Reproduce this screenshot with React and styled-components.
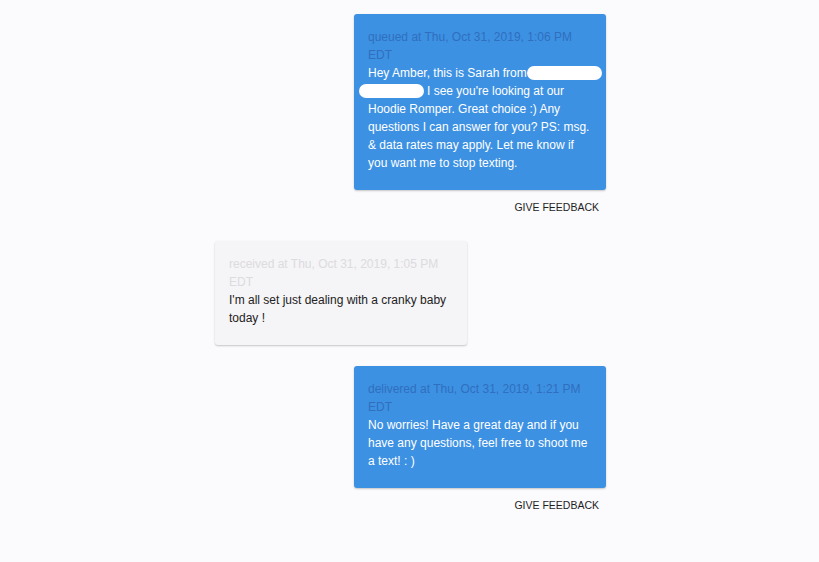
import React from 'react'
import styled, { createGlobalStyle } from 'styled-components'

const GlobalStyle = createGlobalStyle`
  html, body {
    margin: 0;
    padding: 0;
    background: #fbfafc;
  }
  body {
    font-family: 'Liberation Sans', Arial, sans-serif;
  }
`

const StyledThread = styled.div`
  width: 391px;
  margin: 0 auto;
  padding: 14px 0 0 2px;
  display: flex;
  flex-direction: column;
  gap: 21px;
`

const MessageRow = styled.div`
  display: flex;
  flex-direction: column;
  align-items: ${({ $outgoing }) => ($outgoing ? 'flex-end' : 'flex-start')};
`

const Bubble = styled.div`
  width: 252px;
  box-sizing: border-box;
  padding: 14px 14px 18px 14px;
  border-radius: 3px;
  background: ${({ $outgoing }) => ($outgoing ? '#3d91e3' : '#f5f4f6')};
  color: ${({ $outgoing }) => ($outgoing ? '#ffffff' : '#222222')};
  box-shadow: 0 1px 2px rgba(0, 0, 0, 0.22);
  font-size: 12px;
  line-height: 18px;
`

const Status = styled.div`
  color: ${({ $outgoing }) => ($outgoing ? '#2f6fbd' : '#dcdbde')};
`

const Body = styled.div``

const NoWrap = styled.span`
  white-space: nowrap;
`

const Redacted = styled.span`
  display: inline-block;
  width: ${({ $w }) => $w}px;
  height: 14px;
  margin-left: ${({ $ml }) => ($ml ? $ml : 0)}px;
  margin-right: ${({ $mr }) => ($mr ? $mr : 0)}px;
  vertical-align: -3px;
  background: #ffffff;
  border-radius: 7px;
`

const Feedback = styled.div`
  height: 30px;
  padding: 11px 7px 0 0;
  box-sizing: border-box;
  font-size: 10.5px;
  line-height: 13px;
  color: #1e1e1e;
`

const messages = [
  {
    id: 1,
    outgoing: true,
    status: 'queued at Thu, Oct 31, 2019, 1:06 PM EDT',
    body: (
      <>
        <NoWrap>
          Hey Amber, this is Sarah from<Redacted $w={75} />
        </NoWrap>
        <br />
        <Redacted $w={65} $ml={-9} $mr={3} />I see you're looking at our Hoodie Romper.
        Great choice :) Any questions I can answer for you? PS: msg. &amp; data rates may
        apply. Let me know if you want me to stop texting.
      </>
    ),
  },
  {
    id: 2,
    outgoing: false,
    status: 'received at Thu, Oct 31, 2019, 1:05 PM EDT',
    body: "I'm all set just dealing with a cranky baby today !",
  },
  {
    id: 3,
    outgoing: true,
    status: 'delivered at Thu, Oct 31, 2019, 1:21 PM EDT',
    body: 'No worries! Have a great day and if you have any questions, feel free to shoot me a text! : )',
  },
]

const App = () => {
  return (
    <>
      <GlobalStyle />
      <StyledThread>
        {messages.map((m) => (
          <MessageRow key={m.id} $outgoing={m.outgoing}>
            <Bubble $outgoing={m.outgoing}>
              <Status $outgoing={m.outgoing}>{m.status}</Status>
              <Body>{m.body}</Body>
            </Bubble>
            {m.outgoing && <Feedback>GIVE FEEDBACK</Feedback>}
          </MessageRow>
        ))}
      </StyledThread>
    </>
  )
}

export default App
